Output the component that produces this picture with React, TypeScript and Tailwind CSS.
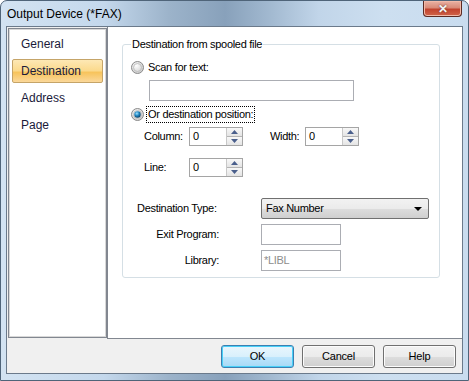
import React from "react";

const navItems = ["General", "Destination", "Address", "Page"];

function Radio({ checked }: { checked?: boolean }) {
  return (
    <svg width="13" height="13" viewBox="0 0 13 13" className="shrink-0">
      <defs>
        <radialGradient id={checked ? "rgOn" : "rgOff"} cx="0.4" cy="0.35" r="0.7">
          <stop offset="0" stopColor="#ffffff" />
          <stop offset="1" stopColor="#c9c9c9" />
        </radialGradient>
        <radialGradient id="dot" cx="0.4" cy="0.35" r="0.7">
          <stop offset="0" stopColor="#9fe2ff" />
          <stop offset="0.5" stopColor="#1e84c0" />
          <stop offset="1" stopColor="#0c3a5c" />
        </radialGradient>
      </defs>
      <circle cx="6.5" cy="6.5" r="6" fill={`url(#${checked ? "rgOn" : "rgOff"})`} stroke="#8a8a8a" />
      <circle cx="6.5" cy="6.5" r="4" fill="none" stroke="#b8b8b8" strokeWidth="0.8" />
      {checked && <circle cx="6.5" cy="6.5" r="3.2" fill="url(#dot)" />}
    </svg>
  );
}

function Spin({ width }: { width: string }) {
  return (
    <div className={`flex h-[19px] ${width} border border-[#a5a5a5] bg-white`}>
      <div className="flex-1 pl-[3px] text-[11px] leading-[17px] text-black">0</div>
      <div className="flex w-[16px] flex-col border-l border-[#c8c8c8] bg-[#f0f0f0]">
        <div className="flex flex-1 items-center justify-center border-b border-[#b4b4b4] bg-[linear-gradient(#f8f8f8,#e4e4e4)]">
          <svg width="7" height="4" viewBox="0 0 7 4">
            <path d="M0 4 L3.5 0 L7 4 Z" fill="#4a5f8c" />
          </svg>
        </div>
        <div className="flex flex-1 items-center justify-center bg-[linear-gradient(#f8f8f8,#e4e4e4)]">
          <svg width="7" height="4" viewBox="0 0 7 4">
            <path d="M0 0 L7 0 L3.5 4 Z" fill="#4a5f8c" />
          </svg>
        </div>
      </div>
    </div>
  );
}

function DlgButton({ label, primary }: { label: string; primary?: boolean }) {
  return (
    <button
      className={`h-[23px] w-[73px] rounded-[3px] border text-[11px] tracking-[-0.2px] text-black ${
        primary
          ? "border-[#3c7fb1] bg-[linear-gradient(#eaf6fd_0%,#d9f0fc_50%,#bee6fd_51%,#a7d9f5_100%)] shadow-[inset_0_0_0_1px_#48d0f8]"
          : "border-[#707070] bg-[linear-gradient(#f2f2f2_0%,#ebebeb_50%,#dddddd_51%,#cfcfcf_100%)] shadow-[inset_0_0_0_1px_#fcfcfc]"
      }`}
    >
      {label}
    </button>
  );
}

export default function App() {
  return (
    <div className="h-[381px] w-[469px] overflow-hidden font-['Liberation_Sans',Arial,sans-serif]">
      <div className="flex h-full flex-col rounded-t-[7px] border border-[#4f6479] bg-[linear-gradient(90deg,#d3e3f2_0%,#c4d8ec_22%,#9cb3ca_36%,#88a1bb_48%,#a3bad1_58%,#c1d5e9_68%,#cddff0_82%,#c9dcef_100%)]">
        {/* Title bar */}
        <div className="flex h-[25px] shrink-0 items-start justify-between">
          <div className="pl-[6px] pt-[6px] text-[12px] leading-[14px] text-black">Output Device (*FAX)</div>
          <div className="mr-[6px] flex h-[16px] w-[39px] items-center justify-center rounded-b-[4px] border border-t-0 border-[#5b2a23] bg-[linear-gradient(#eab2a4_0%,#d88a78_45%,#c2432e_55%,#d0644a_100%)] shadow-[inset_0_0_0_1px_#f1b9a8]">
            <span className="text-[12px] font-bold leading-[12px] text-[#f4f4f4] [text-shadow:0_0_2px_#5b2a23]">✕</span>
          </div>
        </div>

        {/* Client area */}
        <div className="mx-[5px] mb-[6px] flex flex-1 flex-col border border-[#6b7a8b] bg-[#f0f0f0]">
          <div className="flex h-[312px] shrink-0">
            {/* Left nav */}
            <div className="ml-[1px] mt-[1px] flex h-[310px] w-[99px] flex-col gap-[3px] border border-[#828790] bg-white pt-[3px] shadow-[inset_0_0_0_1px_#d8d8d8]">
              {navItems.map((item) => (
                <div
                  key={item}
                  className={`mx-[3px] h-[24px] pl-[8px] text-[12px] leading-[22px] text-[#1a1a3a] ${
                    item === "Destination"
                      ? "rounded-[2px] border border-[#c5a468] bg-[linear-gradient(#fde8b5_0%,#fbd98b_50%,#f7c35a_55%,#fbd89a_100%)]"
                      : "border border-transparent"
                  }`}
                >
                  {item}
                </div>
              ))}
            </div>

            {/* Right page */}
            <div className="flex-1 border-b border-l border-[#828790] bg-white pl-[14px] pt-[17px] text-[11px] tracking-[-0.3px] text-black">
              <div className="h-[234px] w-[318px] rounded-[3px] border border-[#d5dfe5]">
                <span className="-mt-[8px] ml-[8px] block w-fit bg-white px-[1px] text-[11px] leading-[14px] tracking-[-0.3px]">
                  Destination from spooled file
                </span>

                <div className="ml-[8px] mt-[8px] flex h-[16px] items-center gap-[4px]">
                  <Radio />
                  <span>Scan for text:</span>
                </div>

                <div className="ml-[26px] mt-[5px] h-[21px] w-[205px] border border-[#abadb3] bg-white" />

                <div className="ml-[8px] mt-[5px] flex h-[17px] items-center gap-[2px]">
                  <Radio checked />
                  <span className="border border-dotted border-black px-[1px] leading-[15px]">Or destination position:</span>
                </div>

                <div className="mt-[4px] flex h-[19px] items-center">
                  <span className="ml-[21px] w-[45px]">Column:</span>
                  <Spin width="w-[54px]" />
                  <span className="ml-[27px] w-[35px]">Width:</span>
                  <Spin width="w-[54px]" />
                </div>

                <div className="mt-[12px] flex h-[19px] items-center">
                  <span className="ml-[21px] w-[45px]">Line:</span>
                  <Spin width="w-[54px]" />
                </div>

                <div className="mt-[21px] flex h-[21px] items-center">
                  <span className="ml-[14px] w-[124px]">Destination Type:</span>
                  <div className="flex h-[21px] w-[168px] items-center justify-between rounded-[2px] border border-[#707070] bg-[linear-gradient(#f2f2f2_0%,#ebebeb_50%,#dddddd_51%,#cfcfcf_100%)] pl-[4px] pr-[6px]">
                    <span>Fax Number</span>
                    <svg width="8" height="4" viewBox="0 0 8 4">
                      <path d="M0 0 L8 0 L4 4 Z" fill="#000" />
                    </svg>
                  </div>
                </div>

                <div className="mt-[5px] flex h-[21px] items-center">
                  <span className="w-[96px] text-right">Exit Program:</span>
                  <div className="ml-[42px] h-[21px] w-[80px] border border-[#abadb3] bg-white" />
                </div>

                <div className="mt-[5px] flex h-[21px] items-center">
                  <span className="w-[96px] text-right">Library:</span>
                  <div className="ml-[42px] h-[21px] w-[80px] border border-[#abadb3] bg-white pl-[2px] leading-[19px] text-[#8d8d8d]">
                    *LIBL
                  </div>
                </div>
              </div>
            </div>
          </div>

          {/* Buttons */}
          <div className="flex justify-end gap-[8px] pr-[6px] pt-[6px]">
            <DlgButton label="OK" primary />
            <DlgButton label="Cancel" />
            <DlgButton label="Help" />
          </div>
        </div>
      </div>
    </div>
  );
}
